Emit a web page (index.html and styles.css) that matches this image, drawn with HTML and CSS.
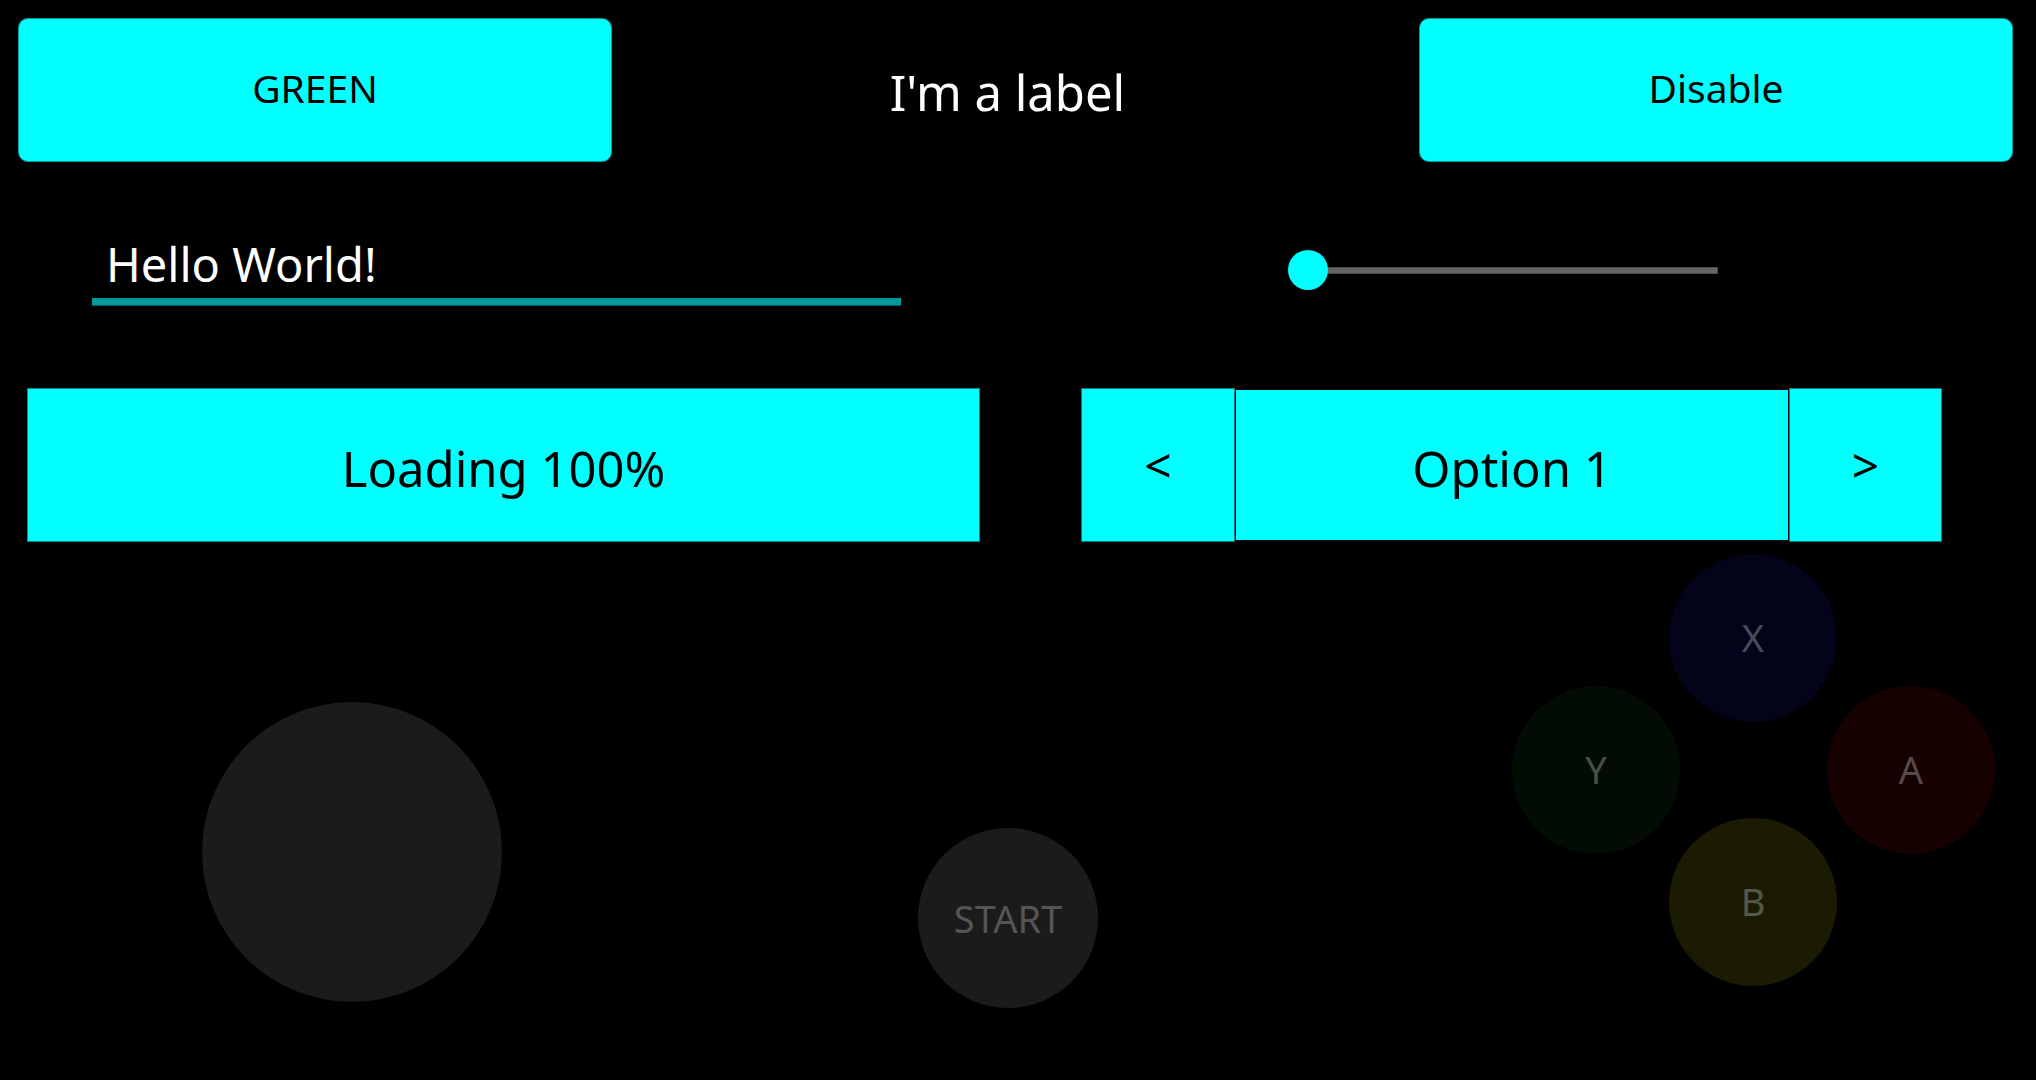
FILE: index.html
```html
<!DOCTYPE html>
<html>
<head>
<meta charset="utf-8">
<link rel="stylesheet" href="styles.css">
</head>
<body>
<div class="screen">
  <div class="row-top">
    <div class="btn">GREEN</div>
    <div class="label">I'm a label</div>
    <div class="btn">Disable</div>
  </div>
  <div class="row-mid">
    <div class="line-edit">Hello World!</div>
    <div class="slider">
      <div class="track"></div>
      <div class="knob"></div>
    </div>
  </div>
  <div class="row-bars">
    <div class="progress">Loading 100%</div>
    <div class="options">
      <div class="opt-btn">&lt;</div>
      <div class="opt-value">Option 1</div>
      <div class="opt-btn">&gt;</div>
    </div>
  </div>
  <div class="pad">
    <div class="stick"></div>
    <div class="round start">START</div>
    <div class="round face x">X</div>
    <div class="round face y">Y</div>
    <div class="round face a">A</div>
    <div class="round face b">B</div>
  </div>
</div>
</body>
</html>
```
FILE: styles.css
```css
html, body {
  margin: 0;
  padding: 0;
  background: #000;
}
body {
  width: 2036px;
  height: 1080px;
  overflow: hidden;
  font-family: "Noto Sans", "DejaVu Sans", sans-serif;
}
.screen {
  position: relative;
  width: 2036px;
  height: 1080px;
}
.row-top {
  display: grid;
  grid-template-columns: 594px 1fr 594px;
  padding: 18px 23px 0 18px;
  height: 144px;
}
.btn {
  background: #00ffff;
  border: 1px solid #0a9a9a;
  border-radius: 10px;
  box-sizing: border-box;
  height: 144px;
  display: flex;
  align-items: center;
  justify-content: center;
  font-size: 39px;
  line-height: 39px;
  color: #000;
  padding-bottom: 6px;
}
.label {
  display: flex;
  align-items: center;
  justify-content: center;
  color: #fff;
  font-size: 49px;
  line-height: 49px;
  padding-top: 4px;
  padding-right: 16px;
}
.row-mid {
  display: flex;
  align-items: flex-start;
  padding-left: 92px;
  margin-top: 79px;
}
.line-edit {
  width: 809px;
  box-sizing: border-box;
  padding: 0 0 10px 14px;
  font-size: 47px;
  line-height: 47px;
  color: #fff;
  border-bottom: 7px solid #009a9a;
  box-shadow: 0 1px 0 #005f5f;
}
.slider {
  position: relative;
  margin-left: 387px;
  margin-top: 9px;
  width: 430px;
  height: 40px;
  display: flex;
  align-items: center;
}
.track {
  flex: 1;
  margin-left: 12px;
  height: 7px;
  box-sizing: border-box;
  background: #666;
  border: 1px solid #4a4a4a;
}
.knob {
  position: absolute;
  left: 0;
  top: 0;
  width: 40px;
  height: 40px;
  border-radius: 50%;
  background: #00ffff;
}
.row-bars {
  display: flex;
  align-items: flex-start;
  margin-top: 83px;
  padding-left: 27px;
}
.progress {
  width: 953px;
  height: 154px;
  box-sizing: border-box;
  background: #00ffff;
  border: 1px solid #0a8a8a;
  display: flex;
  align-items: center;
  justify-content: center;
  font-size: 49px;
  line-height: 49px;
  padding-top: 6px;
  color: #000;
}
.options {
  display: flex;
  align-items: center;
  gap: 1px;
  margin-left: 101px;
  height: 154px;
}
.opt-btn {
  width: 154px;
  height: 154px;
  box-sizing: border-box;
  background: #00ffff;
  border: 1px solid #0a7a7a;
  display: flex;
  align-items: center;
  justify-content: center;
  font-size: 48px;
  line-height: 48px;
  color: #000;
}
.opt-btn:last-child {
  width: 153px;
}
.opt-value {
  width: 552px;
  height: 150px;
  background: #00ffff;
  display: flex;
  align-items: center;
  justify-content: center;
  font-size: 49px;
  line-height: 49px;
  padding-top: 6px;
  box-sizing: border-box;
  color: #000;
}
.pad {
  position: absolute;
  inset: 0;
  pointer-events: none;
}
.stick {
  position: absolute;
  left: 202px;
  top: 702px;
  width: 300px;
  height: 300px;
  border-radius: 50%;
  background: #1b1b1b;
}
.round {
  position: absolute;
  border-radius: 50%;
  display: flex;
  align-items: center;
  justify-content: center;
  font-size: 38px;
  line-height: 38px;
}
.start {
  left: 918px;
  top: 828px;
  width: 180px;
  height: 180px;
  background: #1b1b1b;
  color: #555;
}
.face {
  width: 168px;
  height: 168px;
  padding-bottom: 3px;
  box-sizing: border-box;
}
.x { left: 1669px; top: 554px; background: #03031a; color: #4a4a5a; }
.y { left: 1512px; top: 686px; background: #030c03; color: #465046; }
.a { left: 1827px; top: 686px; background: #160000; color: #584a4a; }
.b { left: 1669px; top: 818px; background: #1b1b03; color: #56564a; }
```
